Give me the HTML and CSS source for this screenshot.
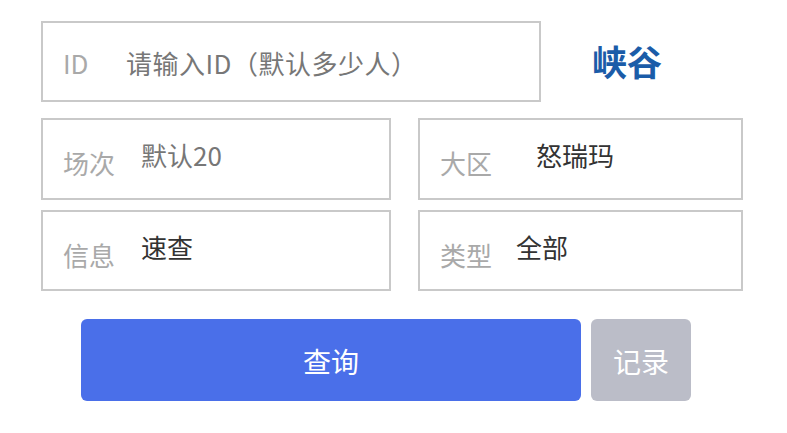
FILE: index.html
```html
<!DOCTYPE html>
<html lang="zh-CN">
<head>
<meta charset="utf-8">
<link rel="stylesheet" href="styles.css">
</head>
<body>
<div class="page">
  <div class="row row-top">
    <div class="field field-id">
      <span class="label label-id">ID</span>
      <span class="value placeholder">请输入ID（默认多少人）</span>
    </div>
    <div class="title">峡谷</div>
  </div>
  <div class="row row-mid">
    <div class="field field-left">
      <span class="label">场次</span>
      <span class="value placeholder">默认20</span>
    </div>
    <div class="field field-right">
      <span class="label">大区</span>
      <span class="value value-region">怒瑞玛</span>
    </div>
  </div>
  <div class="row row-low">
    <div class="field field-left">
      <span class="label">信息</span>
      <span class="value">速查</span>
    </div>
    <div class="field field-right">
      <span class="label">类型</span>
      <span class="value">全部</span>
    </div>
  </div>
  <div class="row row-buttons">
    <button class="btn btn-query">查询</button>
    <button class="btn btn-record">记录</button>
  </div>
</div>
</body>
</html>
```
FILE: styles.css
```css
* { box-sizing: border-box; }
html, body {
  margin: 0;
  padding: 0;
  background: #ffffff;
}
body {
  font-family: "Noto Sans CJK SC", "Noto Sans", sans-serif;
  color: #333333;
}
.page {
  padding: 21px 0 0 41px;
  width: 787px;
}
.row {
  display: flex;
  align-items: center;
}
.row-mid { margin-top: 16px; }
.row-low { margin-top: 10px; }
.row-buttons {
  margin-top: 28px;
  padding-left: 40px;
  gap: 10px;
}
.field {
  border: 2px solid #c9c9c9;
  height: 81px;
  display: flex;
  align-items: center;
  padding-left: 20px;
  font-size: 26px;
  line-height: 1;
}
.field-id { width: 500px; }
.field-left { width: 350px; }
.field-right { width: 325px; margin-left: 27px; }
.row-mid .field { height: 82px; }
.row-low .field { height: 81px; }
.label {
  color: #a9a9a9;
  width: 78px;
  flex: none;
  padding-top: 8px;
}
.label-id {
  width: 63px;
  padding-top: 3px;
}
.value {
  color: #333333;
  padding-bottom: 8px;
}
.field-id .value {
  padding-bottom: 0;
  padding-top: 3px;
  letter-spacing: 0.5px;
}
.field-right .value { margin-left: -2px; }
.field-right .value-region { margin-left: 18px; }
.placeholder { color: #777777; }
.title {
  margin-left: 51px;
  font-size: 35px;
  font-weight: 700;
  color: #1b5ca8;
  padding-bottom: 2px;
}
.btn {
  border: none;
  height: 82px;
  border-radius: 6px;
  color: #ffffff;
  font-family: "Noto Sans CJK SC", "Noto Sans", sans-serif;
  font-size: 28px;
  padding: 0;
  padding-top: 2px;
}
.btn-query {
  width: 500px;
  background: #4a6fe9;
}
.btn-record {
  width: 100px;
  background: #bbbdc8;
}
```
